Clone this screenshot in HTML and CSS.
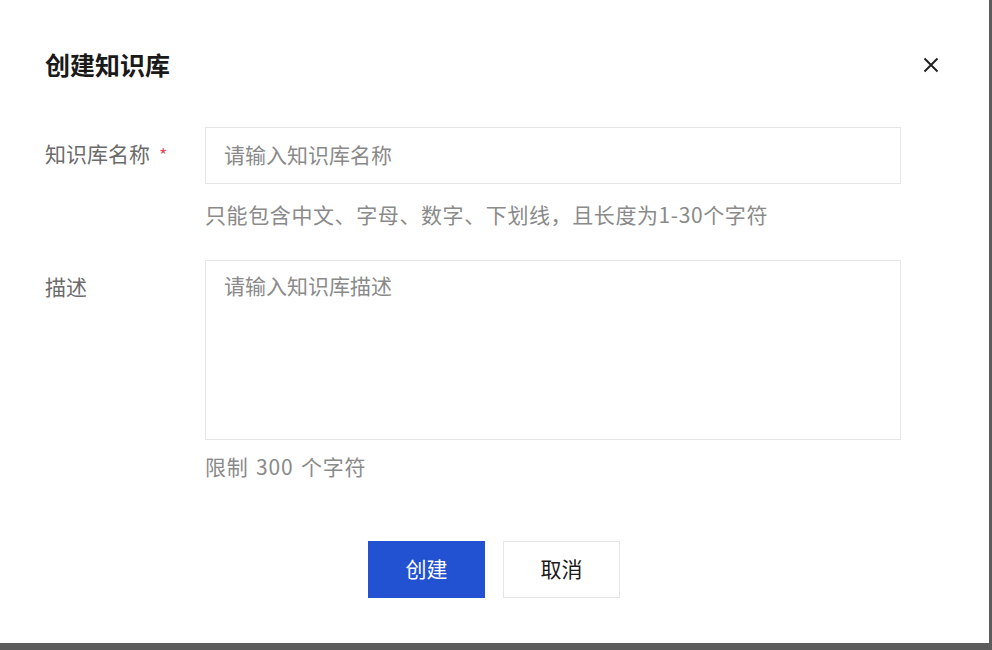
FILE: index.html
```html
<!DOCTYPE html>
<html lang="zh-CN">
<head>
<meta charset="utf-8">
<title>创建知识库</title>
<link rel="stylesheet" href="styles.css">
</head>
<body>
<div class="dialog">
  <div class="header">
    <h1 class="title">创建知识库</h1>
    <button class="close" aria-label="关闭">
      <svg width="16" height="16" viewBox="0 0 16 16"><path d="M1.5 1.5 L14.5 14.5 M14.5 1.5 L1.5 14.5" stroke="#222" stroke-width="2" fill="none"/></svg>
    </button>
  </div>
  <div class="form">
    <div class="row">
      <label class="label">知识库名称<span class="req">*</span></label>
      <div class="control">
        <input class="input" type="text" placeholder="请输入知识库名称">
        <div class="help help-name">只能包含中文、字母、数字、下划线，且长度为1-30个字符</div>
      </div>
    </div>
    <div class="row row-desc">
      <label class="label">描述</label>
      <div class="control">
        <textarea class="textarea" placeholder="请输入知识库描述"></textarea>
        <div class="help help-desc">限制 300 个字符</div>
      </div>
    </div>
  </div>
  <div class="footer">
    <button class="btn btn-primary">创建</button>
    <button class="btn btn-default">取消</button>
  </div>
</div>
</body>
</html>
```
FILE: styles.css
```css
* { box-sizing: border-box; }
html, body { margin: 0; padding: 0; }
body {
  background: #5c5c5c;
  width: 992px;
  height: 650px;
  overflow: hidden;
  font-family: "Noto Sans CJK SC", "Noto Sans", sans-serif;
}
.dialog {
  width: 989px;
  height: 643px;
  background: #fff;
  padding: 45px 0 0 45px;
}
.header {
  display: flex;
  align-items: center;
  justify-content: space-between;
  padding-right: 50px;
  height: 38px;
}
.title {
  margin: 0;
  font-size: 25px;
  line-height: 38px;
  font-weight: 700;
  color: #1a1a1a;
}
.close {
  border: 0;
  background: none;
  padding: 0;
  margin-top: 2px;
  width: 16px;
  height: 16px;
  display: flex;
  cursor: pointer;
}
.form {
  margin-top: 44px;
}
.row {
  display: grid;
  grid-template-columns: 160px 696px;
}
.row-desc { margin-top: 30px; }
.label {
  font-size: 21px;
  color: #6b6b6b;
  line-height: 53px;
  height: 57px;
}
.req {
  color: #e34d59;
  margin-left: 9px;
  font-size: 18px;
}
.control { display: flex; flex-direction: column; }
.input, .textarea {
  width: 696px;
  border: 1.5px solid #e6e6e6;
  border-radius: 0;
  font-family: inherit;
  font-size: 21px;
  color: #333;
  outline: none;
  background: #fff;
}
.input {
  height: 57px;
  padding: 0 18px 3px;
}
.textarea {
  height: 180px;
  padding: 8px 18px;
  line-height: 32px;
  resize: none;
  display: block;
}
.input::placeholder, .textarea::placeholder { color: #8a8a8a; }
.help {
  font-size: 21px;
  color: #8a8a8a;
  line-height: 32px;
}
.help-name { margin-top: 14px; letter-spacing: 0.6px; }
.help-desc { margin-top: 10px; letter-spacing: 0.8px; word-spacing: 2px; }
.footer {
  display: flex;
  justify-content: center;
  gap: 18px;
  margin-top: 59px;
  padding-right: 46px;
}
.btn {
  width: 117px;
  height: 57px;
  font-family: inherit;
  font-size: 21px;
  border-radius: 0;
  padding: 0 0 3px;
  cursor: pointer;
}
.btn-primary {
  background: #2251d1;
  color: #fff;
  border: 1.5px solid #2251d1;
}
.btn-default {
  background: #fff;
  color: #1a1a1a;
  border: 1.5px solid #e6e6e6;
}
```
